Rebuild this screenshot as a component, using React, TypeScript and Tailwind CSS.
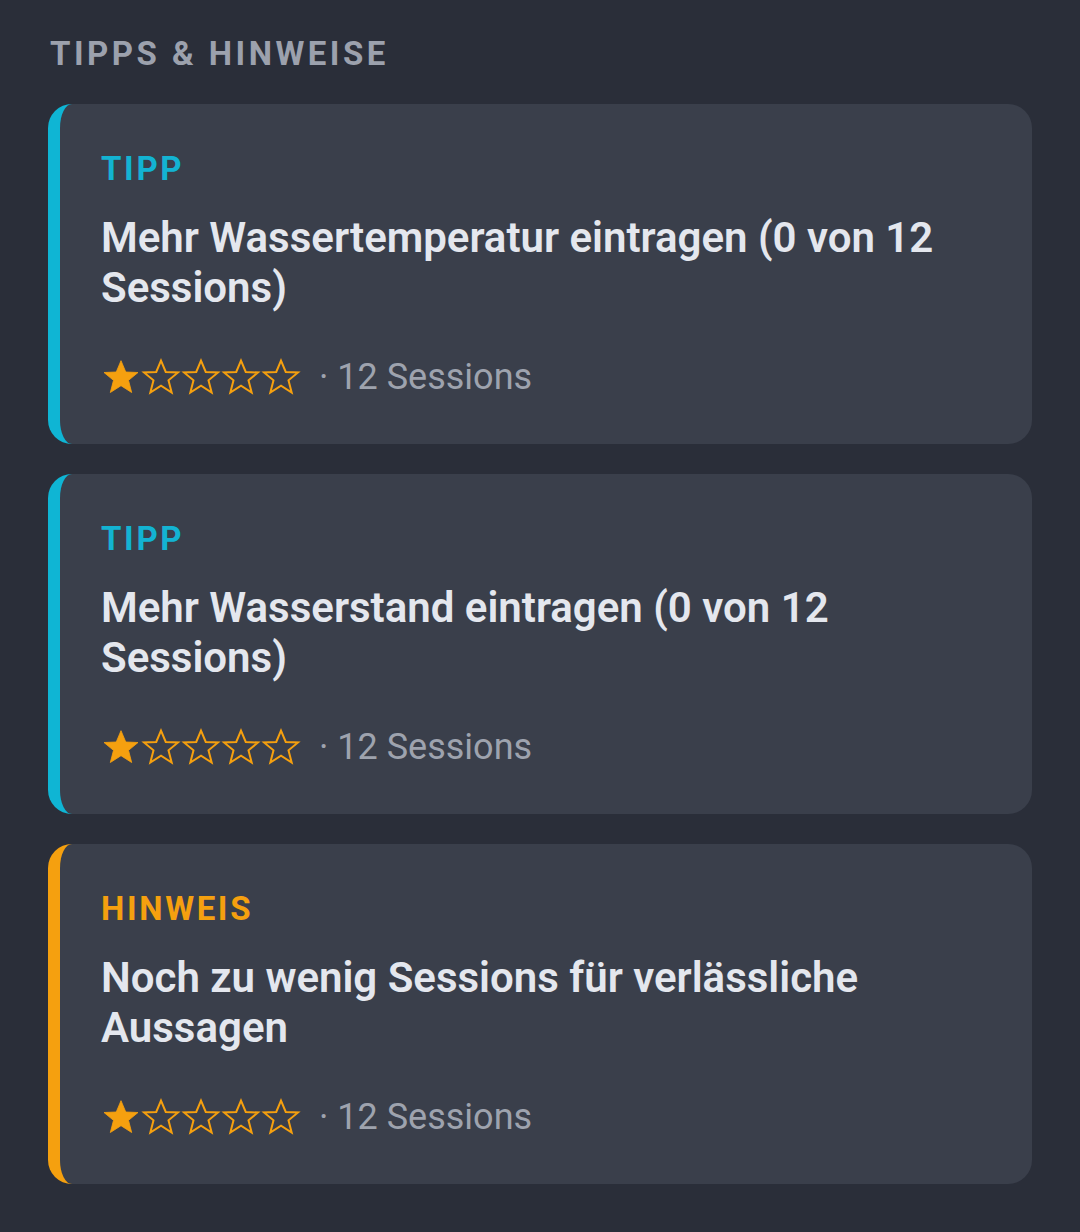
import React from "react";

type Tip = {
  kind: "TIPP" | "HINWEIS";
  text: string;
  rating: number;
  sessions: number;
};

const tips: Tip[] = [
  { kind: "TIPP", text: "Mehr Wassertemperatur eintragen (0 von 12 Sessions)", rating: 1, sessions: 12 },
  { kind: "TIPP", text: "Mehr Wasserstand eintragen (0 von 12 Sessions)", rating: 1, sessions: 12 },
  { kind: "HINWEIS", text: "Noch zu wenig Sessions für verlässliche Aussagen", rating: 1, sessions: 12 },
];

function Star({ filled }: { filled: boolean }) {
  return (
    <svg viewBox="0 0 24 24" className="h-[40px] w-[40px]" aria-hidden>
      <polygon
        points="12,2.2 14.85,9 22.2,9.3 16.5,14 18.4,21.3 12,17.2 5.6,21.3 7.5,14 1.8,9.3 9.15,9"
        fill={filled ? "#f5a00f" : "none"}
        stroke="#f5a00f"
        strokeWidth={filled ? 0.5 : 1.2}
        strokeLinejoin="miter"
      />
    </svg>
  );
}

function TipCard({ tip }: { tip: Tip }) {
  const isTip = tip.kind === "TIPP";
  return (
    <div
      className={`rounded-[24px] border-l-[12px] bg-[#3a3f4b] pt-[45px] pb-[45px] pl-[41px] pr-[48px] ${
        isTip ? "border-[#0fb5d4]" : "border-[#f5a00f]"
      }`}
    >
      <p
        className={`text-[33px] leading-[40px] font-bold tracking-[0.08em] ${
          isTip ? "text-[#13b3d2]" : "text-[#f5a00f]"
        }`}
      >
        {tip.kind}
      </p>
      <p className="mt-[24px] text-[42px] leading-[50px] font-semibold text-[#e4e7ee]">{tip.text}</p>
      <div className="mt-[42px] flex h-[44px] items-center">
        <div className="flex">
          {[0, 1, 2, 3, 4].map((i) => (
            <Star key={i} filled={i < tip.rating} />
          ))}
        </div>
        <span className="ml-[18px] text-[36px] leading-[44px] text-[#9ea3ae]">· {tip.sessions} Sessions</span>
      </div>
    </div>
  );
}

export default function App() {
  return (
    <div className="min-h-[1232px] bg-[#2a2e39] px-[48px] pt-[30px] pb-[48px] font-['Roboto',sans-serif]">
      <h2 className="pl-[2px] text-[33px] leading-[48px] font-bold tracking-[0.105em] text-[#9ca1ad]">
        TIPPS &amp; HINWEISE
      </h2>
      <div className="mt-[26px] flex flex-col gap-[30px]">
        {tips.map((tip) => (
          <TipCard key={tip.text} tip={tip} />
        ))}
      </div>
    </div>
  );
}
